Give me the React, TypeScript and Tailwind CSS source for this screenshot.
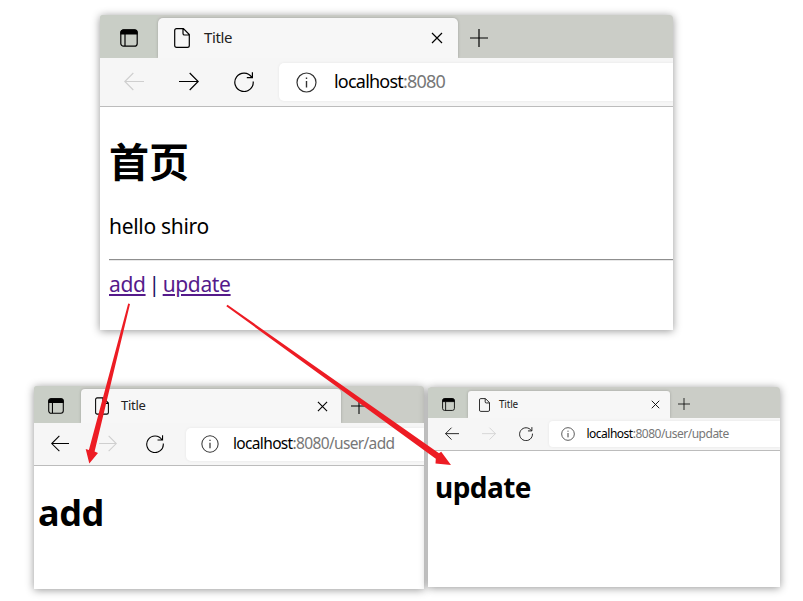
import React from "react";

type Sizes = {
  frame: string; tabBar: string; pane: string; paneIcon: string; tab: string; docIcon: string;
  title: string; close: string; plus: string; toolbar: string; nav: string; navIcon: string;
  field: string; info: string; url: string; gapUrl: string;
};

const large: Sizes = {
  frame: "w-[573px] h-[315px]",
  tabBar: "h-[43px] pt-[3px]",
  pane: "w-[58px] pl-5 pt-[11px]",
  paneIcon: "size-[18px]",
  tab: "w-[300px] h-[40px] pl-4 pr-[15px] rounded-t-[5px]",
  docIcon: "w-4 h-5",
  title: "ml-[14px] pb-0.5 text-[15px] tracking-[-0.4px]",
  close: "size-3",
  plus: "ml-[12px] mt-[10.5px] size-[18px]",
  toolbar: "h-[49px] pl-6 border-b",
  nav: "gap-[35px] w-[155px]",
  navIcon: "size-5",
  field: "h-[38px] pl-[17px] rounded-l-[5px]",
  info: "size-[21px]",
  gapUrl: "ml-[17px]",
  url: "pb-0.5 text-[18px] tracking-[-0.78px]",
};

const medium: Sizes = {
  frame: "w-[390px] h-[203px]",
  tabBar: "h-[37px] pt-[3px]",
  pane: "w-[47px] pl-[14px] pt-[9px]",
  paneIcon: "size-4",
  tab: "w-[260px] h-[34px] pl-[14px] pr-[13px] rounded-t-[4px]",
  docIcon: "w-[14px] h-[18px]",
  title: "ml-[12px] pb-0.5 text-[13px] tracking-[-0.3px]",
  close: "size-[11px]",
  plus: "ml-[10px] mt-[8.5px] size-4",
  toolbar: "h-[43px] pl-[17px] border-b",
  nav: "gap-[29.5px] w-[135px]",
  navIcon: "size-[18px]",
  field: "h-[33px] pl-[15px] rounded-l-[5px]",
  info: "size-[18px]",
  gapUrl: "ml-[14px]",
  url: "pb-px text-[15.5px] tracking-[-0.66px]",
};

const small: Sizes = {
  frame: "w-[352px] h-[200px]",
  tabBar: "h-[31px] pt-[4px]",
  pane: "w-[40px] pl-[14px] pt-[7px]",
  paneIcon: "size-[13px]",
  tab: "w-[202px] h-[27px] pl-[10.5px] pr-[10px] rounded-t-[3px]",
  docIcon: "w-[11px] h-[14px]",
  title: "ml-[9.5px] pb-px text-[10px] tracking-[-0.2px]",
  close: "size-[9px]",
  plus: "ml-[8px] mt-[7px] size-3",
  toolbar: "h-[33px] pl-[16.5px] border-b",
  nav: "gap-[23px] w-[104.5px]",
  navIcon: "size-[14px]",
  field: "h-[26px] pl-[12px] rounded-l-[4px]",
  info: "size-[14px]",
  gapUrl: "ml-[11.5px]",
  url: "text-[12px] tracking-[-0.5px]",
};

const stroke = { fill: "none", stroke: "currentColor", strokeWidth: 1.2 } as const;

function PaneIcon({ className }: { className: string }) {
  return (
    <svg viewBox="0 0 18 18" className={className} {...stroke}>
      <rect x="0.8" y="0.8" width="16.4" height="16.4" rx="2.8" />
      <path d="M1 5V3.5Q1 1 3.5 1h11Q17 1 17 3.5V5z" fill="currentColor" />
      <path d="M5 5v12" />
    </svg>
  );
}

function DocIcon({ className }: { className: string }) {
  return (
    <svg viewBox="0 0 16 20" className={`shrink-0 ${className}`} {...stroke}>
      <path d="M2.6.7H9.4L15.3 6.6V17.4Q15.3 19.3 13.4 19.3H2.6Q.7 19.3.7 17.4V2.6Q.7.7 2.6.7zM9 .9V5.4Q9 7 10.6 7H15" />
    </svg>
  );
}

function Arrow({ className, forward, faded }: { className: string; forward?: boolean; faded?: boolean }) {
  return (
    <svg viewBox="0 0 20 20" className={`shrink-0 ${className} ${faded ? "text-[#cfcfcf]" : "text-black"}`} {...stroke}>
      <path d={forward ? "M0 9.5H19.2M10.7 1L19.2 9.5L10.7 18" : "M20 9.5H.8M9.3 1L.8 9.5L9.3 18"} />
    </svg>
  );
}

function Reload({ className }: { className: string }) {
  return (
    <svg viewBox="0 0 20 20" className={`shrink-0 ${className}`} {...stroke}>
      <path d="M17.7 5.2A9.2 9.2 0 1 0 19.2 9.5M18.4.2V5.6H12.8" />
    </svg>
  );
}

function Info({ className }: { className: string }) {
  return (
    <svg viewBox="0 0 21 21" className={`shrink-0 text-[#333] ${className}`} {...stroke}>
      <circle cx="10.5" cy="10.5" r="9.5" />
      <path d="M10.5 9v6.5M10.5 5.5v1.6" strokeWidth="1.4" />
    </svg>
  );
}

function Browser({ s, path = "", home, children }: { s: Sizes; path?: string; home?: boolean; children: React.ReactNode }) {
  return (
    <section className={`shrink-0 overflow-hidden rounded-t-[3px] bg-white shadow-[0_1px_9px_rgba(0,0,0,0.42)] ${s.frame}`}>
      <div className={`flex bg-[#cbcdc7] ${s.tabBar}`}>
        <div className={`-mt-[3px] shrink-0 rounded-br-[4px] bg-[#c9cec6] ${s.pane}`}>
          <div className="pt-[3px]"><PaneIcon className={s.paneIcon} /></div>
        </div>
        <div className={`flex shrink-0 items-center bg-[#f7f7f7] shadow-[0_0_3px_rgba(0,0,0,0.22)] ${s.tab}`}>
          <DocIcon className={s.docIcon} />
          <span className={`leading-none text-[#222] ${s.title}`}>Title</span>
          <svg viewBox="0 0 12 12" className={`ml-auto shrink-0 ${s.close}`} {...stroke}>
            <path d="M1 1l10 10M11 1L1 11" />
          </svg>
        </div>
        <svg viewBox="0 0 18 18" className={`shrink-0 ${s.plus}`} {...stroke}>
          <path d="M9 0v18M0 9h18" />
        </svg>
      </div>
      <div className={`relative flex items-center border-[#bcbcbc] bg-[#f6f6f6] ${s.toolbar}`}>
        <div className={`flex shrink-0 ${s.nav}`}>
          <Arrow className={s.navIcon} faded={home} />
          <Arrow className={s.navIcon} forward faded={!home} />
          <Reload className={s.navIcon} />
        </div>
        <div className={`flex grow items-center bg-white shadow-[0_0_3px_rgba(0,0,0,0.07)] ${s.field}`}>
          <Info className={s.info} />
          <span className={`whitespace-nowrap leading-none text-[#777] ${s.gapUrl} ${s.url}`}>
            <span className="text-black">localhost</span>:8080{path}
          </span>
        </div>
      </div>
      {children}
    </section>
  );
}

export default function App() {
  return (
    <main className="relative h-[601px] w-[803px] overflow-hidden bg-white pt-[15px] font-['Noto_Sans','Noto_Sans_CJK_SC',sans-serif] text-black">
      <div className="ml-[100px]">
        <Browser s={large} home>
          <div className="pl-[9px]">
            <h1 className="pt-[27px] font-['Noto_Sans_CJK_SC',sans-serif] text-[40px] leading-[52px] font-bold">首页</h1>
            <p className="mt-[25px] text-[21px] leading-[30px] tracking-[-0.3px]">hello shiro</p>
            <hr className="mt-[18px] h-0.5 border-t border-b border-t-[#8f8f8f] border-b-[#e8e8e8]" />
            <p className="mt-[8px] text-[21px] leading-[30px] tracking-[-0.35px]">
              <a className="text-[#551a8b] underline decoration-2 underline-offset-2">add</a>{" "}
              <span className="-mx-[2.2px] text-[#1b1464]">|</span>{" "}
              <a className="text-[#551a8b] underline decoration-2 underline-offset-2">update</a>
            </p>
          </div>
        </Browser>
      </div>
      <div className="mt-[56px] ml-[34px] flex gap-1">
        <Browser s={medium} path="/user/add">
          <h1 className="pt-[22px] pl-1 text-[36px] leading-[50px] font-bold tracking-[-0.4px]">add</h1>
        </Browser>
        <div className="pt-px">
          <Browser s={small} path="/user/update">
            <h1 className="pt-[16px] pl-[7px] text-[28px] leading-[40px] font-bold tracking-[-0.55px]">update</h1>
          </Browser>
        </div>
      </div>
      <svg viewBox="0 0 803 601" className="pointer-events-none absolute inset-0 h-[601px] w-[803px]" fill="#ed1c24">
        <path d="M128.2 303.5L130 304L94.6 451.5L98 453L89.3 463.5L85.7 449L88.9 450Z" />
        <path d="M226.3 306.2L227.5 304.8L439 453.2L441.2 451.8L451 465L435.5 463.5L435.8 458.8Z" />
      </svg>
    </main>
  );
}
